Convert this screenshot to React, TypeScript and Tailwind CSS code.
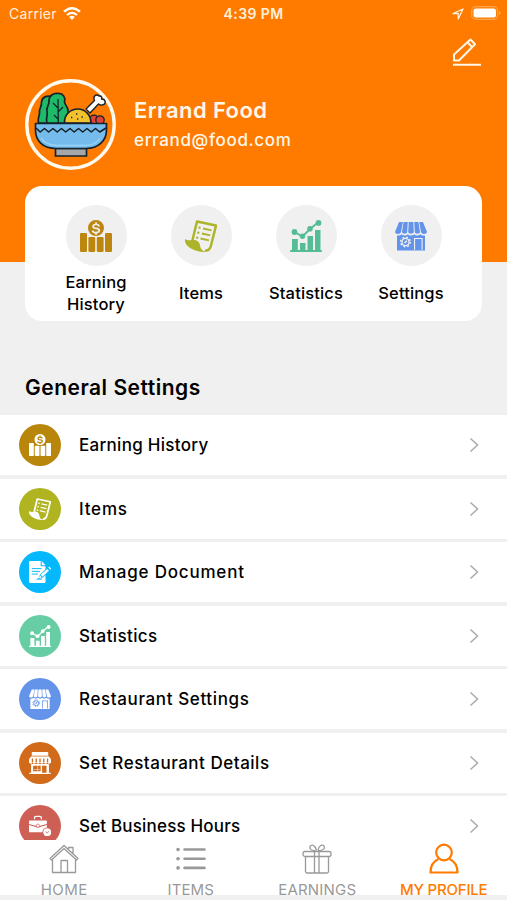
import type { ReactNode } from 'react';

type IconProps = { className?: string };

function CoinsIcon({ className }: IconProps) {
  return (
    <svg viewBox="0 0 32 32" className={className} fill="currentColor">
      <rect x="0" y="13" width="7" height="19" rx="1.2" />
      <rect x="8.4" y="17" width="6.8" height="15" rx="1.2" />
      <rect x="16.8" y="17" width="6.8" height="15" rx="1.2" />
      <rect x="25" y="13" width="7" height="19" rx="1.2" />
      <path
        fillRule="evenodd"
        d="M16 0a8 8 0 1 0 0 16a8 8 0 1 0 0-16zM15.2 2.3h1.7v1.4c1.8.2 2.9 1.2 3.1 2.8h-1.9c-.2-.8-.8-1.2-2-1.2s-2 .4-2 1.1c0 .8.9 1 2.3 1.2c2.1.4 3.8 1 3.8 2.9c0 1.6-1.3 2.6-3.3 2.9v1.3h-1.7v-1.3c-2.1-.2-3.4-1.2-3.5-3h1.9c.2.9 1 1.4 2.4 1.4s2.3-.4 2.3-1.2c0-.8-.9-1.1-2.3-1.3c-2.2-.4-3.8-1-3.8-2.9c0-1.5 1.2-2.5 3-2.7z"
      />
    </svg>
  );
}

function ReceiptIcon({ className }: IconProps) {
  return (
    <svg viewBox="0 0 32 32" className={className} fill="none" stroke="currentColor">
      <path d="M7.500 20L12 1.500L31 5.500L26 25.500C25 29.500 23 31 20 30.500" strokeWidth="2.500" strokeLinejoin="round" />
      <path
        d="M0 19C2 20.500 5 20.500 8.500 19.800C12 20 14.500 22 15 25C15.500 29 17 31 21 31.700C14 33 4 29 1 24C0 22.300-.3 20.500 0 19z"
        fill="currentColor"
        stroke="none"
      />
      <path d="M18 8.500l8.500 1.900M16.800 13.500l8.500 1.900M15.500 18.500l8.500 1.900" strokeWidth="1.800" />
      <path d="M13.500 7.500l2 .4M12.300 12.500l2 .4M11.200 17.500l2 .4" strokeWidth="2.200" />
    </svg>
  );
}

function ChartIcon({ className }: IconProps) {
  return (
    <svg viewBox="0 0 32 32" className={className} fill="currentColor">
      <path d="M2 19h5.800v12H2zM10 23h5.500v8H10zM17.500 16H23v15h-5.500zM25 10h5.500v21H25z" />
      <rect x="0" y="30" width="32" height="2" rx=".8" />
      <path d="M4.500 12L12.500 16.500L20 9L28 2.500" fill="none" stroke="currentColor" strokeWidth="1.900" />
      <circle cx="4.500" cy="12" r="2.900" />
      <circle cx="12.500" cy="16.300" r="2.700" />
      <circle cx="20" cy="8.800" r="2.800" />
      <circle cx="28.500" cy="2.900" r="2.900" />
    </svg>
  );
}

function StoreIcon({ className }: IconProps) {
  return (
    <svg viewBox="0 0 32 32" className={className} fill="currentColor">
      <path d="M4 2h4L6 12c-.4 2.500-5.600 2.500-6 0zM8.600 2h4.200l-.6 10c-.5 2.200-4.900 2.200-5.200 0zM13.700 2h4.600l.5 10c-.5 2.200-5.200 2.200-5.600 0zM19.200 2h4.200L25 12c-.4 2.200-4.800 2.200-5.200 0zM24.200 2H28l4 10c-.4 2.500-5.600 2.500-6 0z" />
      <path
        fillRule="evenodd"
        d="M2 15.500c2 .3 3.700 0 4.700-1.200c1.800 1.600 4.300 1.600 6.100 0c1.800 1.600 4.600 1.600 6.400 0c1.800 1.600 4.300 1.600 6.100 0c1 1.200 2.700 1.500 4.700 1.200V30.500H2zM19 18v11.700h1.100V19.100h6.400v10.600h1.100V18z"
      />
      <g className="text-[#f0f0f0] group-data-[row=true]:text-[#6394e9]" fill="none" stroke="currentColor">
        <circle cx="10.500" cy="22" r="3.600" strokeWidth="1.400" />
        <circle cx="10.500" cy="22" r="4.900" strokeWidth="1.300" strokeDasharray="1.900 1.950" />
        <path d="M9.500 23l2.400-2.300" strokeWidth="1.500" />
      </g>
    </svg>
  );
}

function DocumentIcon({ className }: IconProps) {
  return (
    <svg viewBox="0 0 32 32" className={className}>
      <path d="M2 0H17V7.500H24V30Q24 32 22 32H2Q0 32 0 30V2Q0 0 2 0zM18.500 0L24 6H18.500z" fill="currentColor" />
      <path d="M4 11h14M4 15h12M4 19h9" stroke="#05b8fb" strokeWidth="1.400" />
      <path d="M13 27l3-7L27 9l5 4L20 24z" fill="#05b8fb" />
      <path d="M17 20l9.500-8.500l2.500 2.700L19.500 23zM28 9.500l1.600-1.300l2.800 2.800l-1.500 1.600zM16 21l2.500 2.500l-4.300 2z" fill="currentColor" />
      <path d="M11 27c4-2 4 1 8-1" fill="none" stroke="#05b8fb" strokeWidth="1.400" />
    </svg>
  );
}

function RestaurantIcon({ className }: IconProps) {
  return (
    <svg viewBox="0 0 32 32" className={className} fill="currentColor">
      <path d="M5 0h22q1 0 1 1v4.500H4V1q0-1 1-1zM3 6.500h26l3 4v3H0v-3z" />
      <path d="M0 12.500h32v2c0 3.200-4.600 3.200-5 .5c-.6 2.700-5 2.700-5.500 0c-.6 2.700-5 2.700-5.500 0c-.6 2.700-5 2.700-5.500 0c-.6 2.700-5 2.700-5.500 0c-.4 2.700-5 2.700-5-.5z" />
      <path d="M5 9.500v5.500M10.500 9.500v5.500M16 9.500v5.500M21.500 9.500v5.500M27 9.500v5.500" stroke="#d16a1b" strokeWidth="1.900" />
      <path fillRule="evenodd" d="M3 17.500h26V30h2.500v2H.5v-2H3zM6 20v8h11v-8zM19 20v10h6.500V20z" />
      <path d="M12.500 20v8M7 25.500h9" stroke="currentColor" strokeWidth=".7" />
    </svg>
  );
}

function BriefcaseIcon({ className }: IconProps) {
  return (
    <svg viewBox="0 0 32 32" className={className}>
      <path d="M8 6V3.500Q8 2 10 2H16Q18 2 18 3.500V6" fill="none" stroke="currentColor" strokeWidth="1.800" />
      <path d="M1 8H25Q26 8 26 9V13L15 16Q13 17 11 16L0 13V9Q0 8 1 8zM0 14.500L10 17.500Q13 19 16 17.500L26 14.500V25H0z" fill="currentColor" />
      <circle cx="13" cy="15.500" r="2.300" fill="currentColor" stroke="#cd5f55" strokeWidth="1" />
      <circle cx="26.500" cy="25" r="7" fill="#cd5f55" />
      <circle cx="26.500" cy="25" r="5.700" fill="currentColor" />
      <path d="M24.300 24l2.200 2l2.400-2" fill="none" stroke="#cd5f55" strokeWidth="1.300" />
    </svg>
  );
}

function FoodBowl() {
  return (
    <svg viewBox="0 0 91 91" className="size-[91px]" stroke="#17222b" strokeWidth="1.700" strokeLinejoin="round">
      <circle cx="45.500" cy="45.500" r="43.700" fill="none" stroke="#fffaf0" strokeWidth="3.400" />
      <path d="M13.500 44C12 39 15 37 14.500 33C14 29 17 28 16.500 23C17 18 22 16 27 18V44z" fill="#1dbb68" />
      <path d="M22 44C20 40 23.500 36 22 32C21 28 24.500 26 24 22C24 16 29 14 33 14.500C38 14 41 19 39.500 23C40 27 44 28 43 33C42.500 37 44 40 43 44z" fill="#1dbb68" />
      <path d="M33 20L33.300 44M33 29L28 24M33 33L38 28M33 40L29 36" fill="none" strokeWidth="1.300" />
      <path d="M61 30L69.500 21.500C67.500 18 71 14 74 17C77 16.500 77 19 76.500 20C81 20 81.500 25.500 77 26C75.500 26.500 74.500 25.500 73.500 25L65 34z" fill="#fff" strokeWidth="1.400" />
      <circle cx="69" cy="40.500" r="4.400" fill="#e04437" strokeWidth="1.300" />
      <circle cx="75" cy="41" r="4.200" fill="#e04437" strokeWidth="1.300" />
      <path d="M39.500 44C39 36 45 30 53 30C60 30 66 36 66 44z" fill="#f2c22e" />
      <path d="M46 38.500h1.300M51 35h1.300M52 40h1.300M56.500 38h1.300" strokeWidth="1.500" />
      <path d="M30.500 69.500H61.500V77H30.500z" fill="#a6a7ab" />
      <path d="M10.500 44.500H81.500V51C81.500 62 73 69.500 61 69.500H31C18 69.500 10.500 62 10.500 51z" fill="#75bcec" />
      <path d="M16 59C20 64.500 25 66.500 32 66.500H60C67 66.500 72 64 75 59" fill="none" stroke="#9ad3f5" strokeWidth="1.300" />
      <path
        d="M11 49L15.200 53L19.500 49.500L23.700 53L28 49.500L32.200 53L36.500 49.500L40.700 53L45 49.500L49.200 53L53.500 49.500L57.700 53L62 49.500L66.200 53L70.500 49.500L74.700 53L81 49"
        fill="none"
        strokeWidth="1.600"
      />
    </svg>
  );
}

const shortcuts = [
  { label: <>Earning<br />History</>, icon: <CoinsIcon className="size-8" />, style: 'text-[#bd860e]' },
  { label: 'Items', icon: <ReceiptIcon className="size-8" />, style: 'text-[#aeb42a]' },
  { label: 'Statistics', icon: <ChartIcon className="size-8" />, style: 'text-[#55bd96]' },
  { label: 'Settings', icon: <StoreIcon className="size-8" />, style: 'text-[#6394e9]' },
];

const rows = [
  { label: 'Earning History', icon: <CoinsIcon className="size-[22px]" />, bg: 'bg-[#b8860b]', spacing: 'tracking-[0.29px]' },
  { label: 'Items', icon: <ReceiptIcon className="size-[22px]" />, bg: 'bg-[#b0b420]', spacing: 'tracking-[0.8px]' },
  { label: 'Manage Document', icon: <DocumentIcon className="size-[22px]" />, bg: 'bg-[#05b8fb]', spacing: 'tracking-[0.8px]' },
  { label: 'Statistics', icon: <ChartIcon className="size-[22px]" />, bg: 'bg-[#66cda4]', spacing: 'tracking-[0.38px]' },
  { label: 'Restaurant Settings', icon: <StoreIcon className="size-[22px]" />, bg: 'bg-[#6394e9]', spacing: 'tracking-[0.62px]' },
  { label: 'Set Restaurant Details', icon: <RestaurantIcon className="size-[22px]" />, bg: 'bg-[#d16a1b]', spacing: 'tracking-[0.52px]' },
  { label: 'Set Business Hours', icon: <BriefcaseIcon className="size-[22px]" />, bg: 'bg-[#cd5f55]', spacing: 'tracking-[0.18px]' },
];

function StatusBar() {
  return (
    <div className="flex h-7 items-center px-[9px] text-[14px] leading-none text-[#fff0dc]">
      <div className="flex flex-1 items-center gap-1.5">
        <span className="tracking-[0.02em]">Carrier</span>
        <svg viewBox="0 0 18 13" className="-mt-0.5 h-[13px] w-[18px]" fill="none" stroke="#fff" strokeWidth="2.300">
          <path d="M1 4.700Q9-2.300 17 4.700M4 8Q9 3.700 14 8" />
          <path d="M6.200 10Q9 7.700 11.800 10L9 13z" fill="#fff" stroke="none" />
        </svg>
      </div>
      <span className="font-semibold tracking-[0.4px]">4:39 PM</span>
      <div className="flex flex-1 items-center justify-end gap-[7px]">
        <svg viewBox="0 0 12 12" className="size-3" fill="none" stroke="currentColor" strokeWidth="1.300" strokeLinejoin="round">
          <path d="M11 1L1 5.500H6.200V11z" />
        </svg>
        <svg viewBox="0 0 30 14" className="-mr-[3px] -mt-0.5 h-[14px] w-[30px]">
          <rect x=".7" y=".7" width="26" height="12.600" rx="4" fill="none" stroke="#ffa347" strokeWidth="1.300" />
          <rect x="2.500" y="2.500" width="22.500" height="9" rx="2.500" fill="#fff" />
          <path d="M28 5v4q1.500-.6 1.500-2T28 5z" fill="#ffb366" />
        </svg>
      </div>
    </div>
  );
}

function NavItem({ label, active, spacing, children }: { label: string; active?: boolean; spacing: string; children: ReactNode }) {
  return (
    <div className={`flex flex-1 flex-col items-center pt-[3px] ${active ? 'text-[#ff7b00]' : 'text-[#999]'}`}>
      <svg viewBox="0 0 32 32" className="size-8 shrink-0" fill="none" stroke="currentColor" strokeWidth="1.300" strokeLinejoin="round">
        {children}
      </svg>
      <span className={`mt-[5px] text-[15px] leading-5 whitespace-nowrap ${active ? 'font-medium' : 'font-normal'} ${spacing}`}>{label}</span>
    </div>
  );
}

export default function App() {
  return (
    <div className="flex h-[900px] w-full flex-col overflow-hidden bg-[#f0f0f0] font-['Inter',sans-serif] text-black">
      <header className="h-[262px] shrink-0 bg-[#ff7b00] text-[#fff8ea]">
        <StatusBar />
        <div className="flex h-[51px] justify-end pt-2 pr-[25px]">
          <svg viewBox="0 0 30 32" className="h-8 w-[30px]" fill="none" stroke="currentColor" strokeWidth="2" strokeLinejoin="round">
            <path d="M2 18.500L18.500 3.500L23 8.200L7 24.500H2zM15.500 6.200L20 11M1 28.800h28" />
          </svg>
        </div>
        <div className="flex items-center pl-[25px]">
          <FoodBowl />
          <div className="ml-[18px] pb-0.5">
            <h1 className="text-[22px] leading-8 font-semibold tracking-[0.4px]">Errand Food</h1>
            <p className="text-[17px] leading-7 font-medium tracking-[0.65px]">errand@food.com</p>
          </div>
        </div>
      </header>

      <section className="relative mx-[25px] -mt-[76px] flex h-[135px] shrink-0 justify-center rounded-[17px] bg-white pt-[19px]">
        {shortcuts.map((item, i) => (
          <div key={i} className="flex w-[105px] flex-col items-center">
            <div className={`flex size-[61px] items-center justify-center rounded-full bg-[#f0f0f0] ${item.style}`}>
              {item.icon}
            </div>
            <div className="mt-1 flex h-[45px] items-center text-center text-[16.5px] leading-[22px] font-medium tracking-[0.15px]">
              <span>{item.label}</span>
            </div>
          </div>
        ))}
      </section>

      <h2 className="mt-[50px] h-11 shrink-0 pl-[25px] text-[21px] leading-[34px] font-semibold tracking-[0.5px]">General Settings</h2>

      <main className="flex min-h-0 flex-1 flex-col gap-[3.5px] overflow-hidden">
        {rows.map((row) => (
          <div key={row.label} className="flex h-[60px] shrink-0 items-center bg-white pr-[28px] pl-[19px]">
            <div data-row="true" className={`group flex size-[42px] items-center justify-center rounded-full text-white ${row.bg}`}>
              {row.icon}
            </div>
            <span className={`ml-[18px] flex-1 text-[17px] leading-6 font-medium ${row.spacing}`}>{row.label}</span>
            <svg viewBox="0 0 10 16" className="h-4 w-[10px]" fill="none" stroke="#aaa" strokeWidth="1.500">
              <path d="M1.500 1.500L8.500 8L1.500 14.500" />
            </svg>
          </div>
        ))}
      </main>

      <nav className="flex h-[60px] shrink-0 border-b-[5px] border-[#f0f0f0] bg-white pl-px">
        <NavItem label="HOME" spacing="tracking-[0.5px]">
          <path d="M2 15.500L16 2.500L30 15.500L28.500 17L16 5.500L3.500 17zM4.500 16V29.500H27.500V16M20.500 6V4.500H25V10.500M13 29.500V17.500H19.500V29.500" />
        </NavItem>
        <NavItem label="ITEMS" spacing="tracking-[0.1px]">
          <path d="M9.500 6.500H29.500M9.500 15.700H29.500M9.500 24.900H29.500" strokeWidth="2.600" strokeLinecap="round" />
          <path d="M3 6.500h.1M3 15.700h.1M3 24.900h.1" strokeWidth="3.600" strokeLinecap="round" />
        </NavItem>
        <NavItem label="EARNINGS" spacing="tracking-[0.2px]">
          <rect x="2" y="8.500" width="28" height="5" rx="2" />
          <path d="M4.500 13.500V28.500Q4.500 30 6 30H26Q27.500 30 27.500 28.500V13.500M13.500 8.500V30M18 8.500V30M14.500 7.500C9 8 7.500 4 10 2.500C13 1 15 5 15.500 7.500M17 7.500C17.500 4 20 1 22.500 2.500C25 5 22 8 17 7.500" />
        </NavItem>
        <NavItem label="MY PROFILE" active spacing="tracking-[-0.2px]">
          <circle cx="16" cy="9.500" r="7.800" strokeWidth="2.200" />
          <path d="M10.500 16C5 18.500 2.500 23 2.500 29.500H29.500C29.500 23 27 18.500 21.500 16" strokeWidth="2.200" />
        </NavItem>
      </nav>
    </div>
  );
}
